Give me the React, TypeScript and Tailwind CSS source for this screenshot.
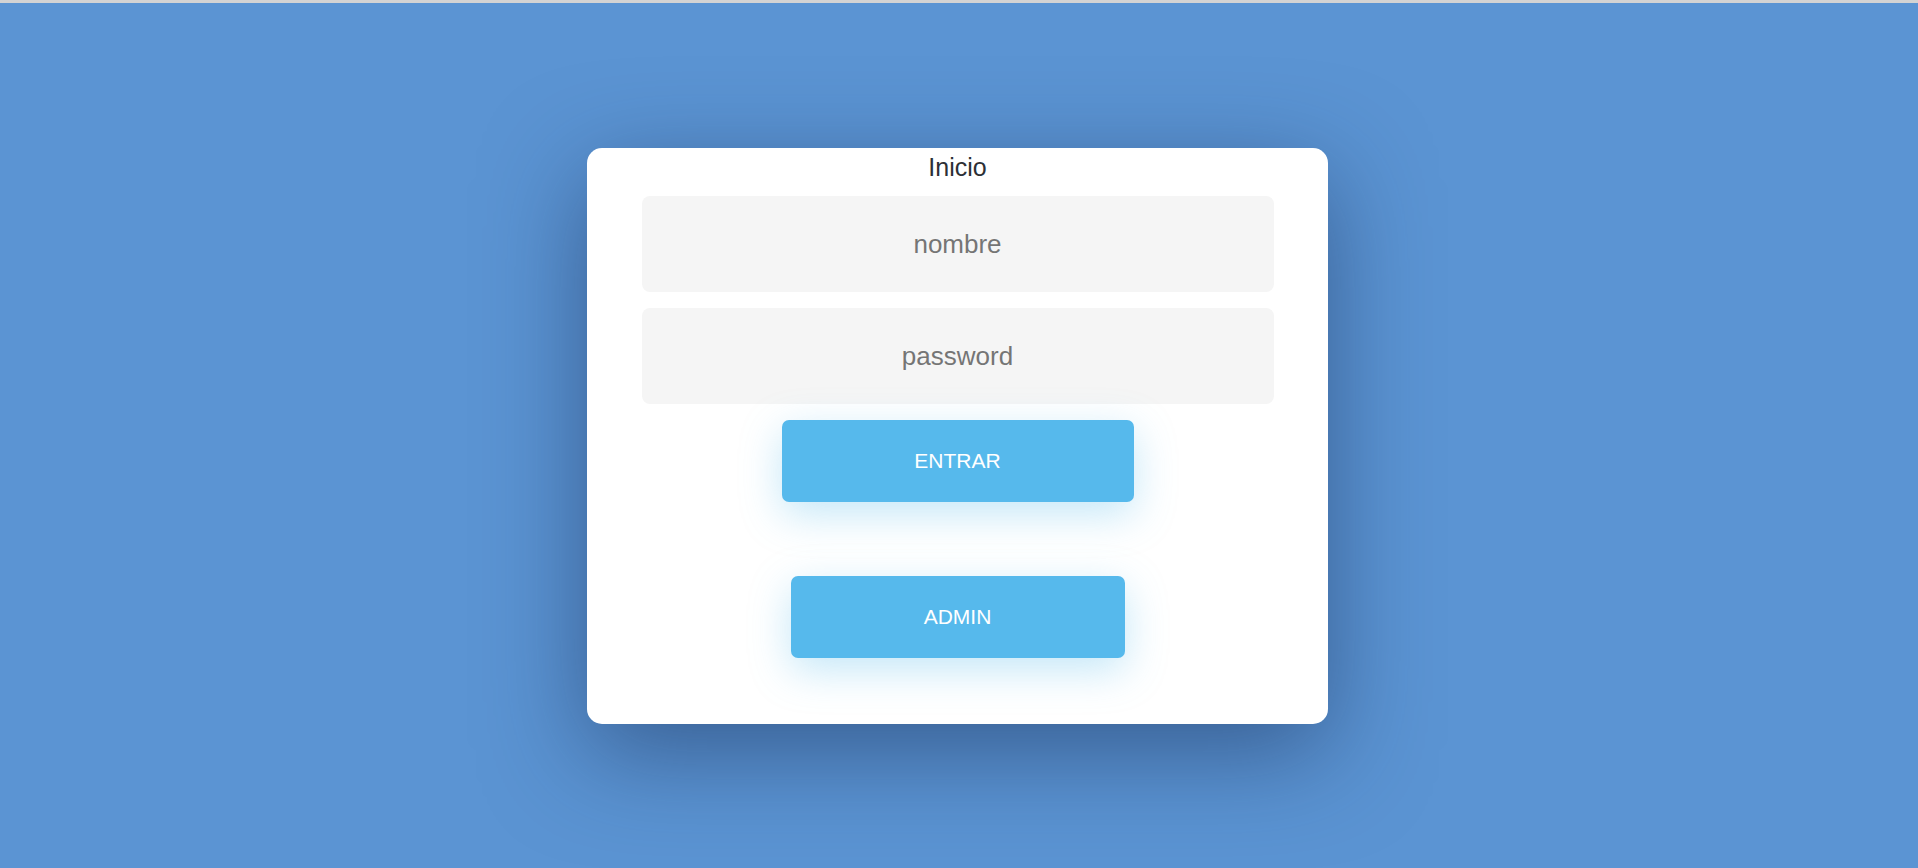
import React from "react";

export default function App() {
  return (
    <div
      className="w-full h-[868px] bg-[#5b94d3] overflow-hidden flex flex-col"
      style={{ fontFamily: '"Liberation Sans", Arial, sans-serif' }}
    >
      <div className="h-[3px] w-full bg-[#d3d3d3] shrink-0" />
      <div className="flex justify-start pt-[145px] pl-[587px]">
        <div className="w-[741px] h-[576px] bg-white rounded-[15px] shadow-[0_28px_100px_rgba(20,40,80,0.5)] flex flex-col items-center">
          <div className="mt-[5px] text-[25px] leading-[29px] text-[#2d3035]">Inicio</div>
          <input
            placeholder="nombre"
            className="mt-[14px] w-[632px] h-[96px] rounded-[8px] bg-[#f5f5f5] text-center text-[26px] text-[#333] placeholder:text-[#757575] outline-none"
          />
          <input
            placeholder="password"
            type="password"
            className="mt-[16px] w-[632px] h-[96px] rounded-[8px] bg-[#f5f5f5] text-center text-[26px] text-[#333] placeholder:text-[#757575] outline-none"
          />
          <button className="mt-[16px] w-[352px] h-[82px] rounded-[7px] bg-[#56b9ec] text-white text-[21px] shadow-[0_12px_40px_rgba(86,185,236,0.35)]">
            ENTRAR
          </button>
          <button className="mt-[74px] w-[334px] h-[82px] rounded-[7px] bg-[#56b9ec] text-white text-[21px] shadow-[0_12px_40px_rgba(86,185,236,0.35)]">
            ADMIN
          </button>
        </div>
      </div>
    </div>
  );
}
